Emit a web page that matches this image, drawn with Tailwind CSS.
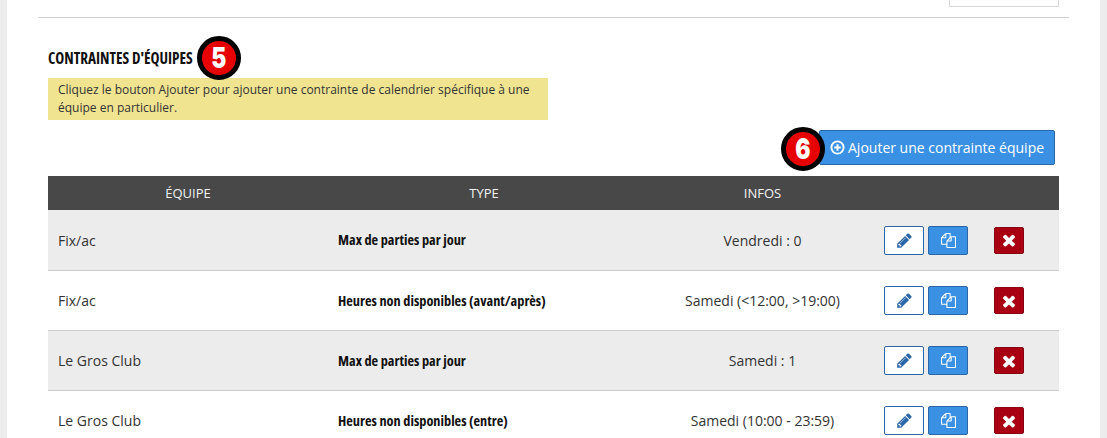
<!DOCTYPE html>
<html lang="fr">
<head>
  <meta charset="UTF-8" />
  <title>Contraintes d'équipes</title>
  <script src="https://cdn.jsdelivr.net/npm/@tailwindcss/browser@4"></script>
</head>
<body class="bg-[#ececec] h-[438px] overflow-hidden font-['Open_Sans',sans-serif] text-[#333]">
  <main class="mx-[7px] bg-white h-[438px] overflow-hidden">
    <div class="mx-[31px] h-[18px] border-b border-[#d0d0d0] flex justify-end pr-[10px]">
      <div class="w-[110px] h-[7px] border border-t-0 border-[#d8d8d8] bg-white"></div>
    </div>

    <section class="px-[41px]">
      <h2 class="relative h-[60px] pt-[32px] text-[15.2px] leading-[16px] font-bold uppercase text-[#111] [font-stretch:75%]">
        Contraintes d'équipes
        <span class="absolute left-[149px] top-[18px] w-[44px] h-[44px] rounded-full bg-[#e60000] border-[5px] border-black flex items-center justify-center text-white text-[29px] font-black font-['Inter',sans-serif]"><span class="inline-block scale-x-[0.78]">5</span></span>
      </h2>
      <p class="w-[500px] h-[42px] bg-[#f0e491] px-[10px] py-[3px] text-[12px] leading-[18px]">Cliquez le bouton Ajouter pour ajouter une contrainte de calendrier spécifique à une équipe en particulier.</p>

      <div class="relative mt-[10px] mb-[11px] flex justify-end pr-[4px]">
        <a class="relative h-[35px] w-[236px] rounded-[2px] bg-[#3a90e3] border border-[#2a66a8] flex items-center pl-[10px] gap-[3px] text-white text-[14px]">
          <svg class="w-[15px] h-[15px]" viewBox="0 0 16 16" fill="none" stroke="white"><circle cx="8" cy="8" r="6.5" stroke-width="2"/><path d="M8 4.5v7M4.5 8h7" stroke-width="2.2"/></svg>
          Ajouter une contrainte équipe
          <span class="absolute left-[-39px] top-[-4px] w-[44px] h-[44px] rounded-full bg-[#e60000] border-[5px] border-black flex items-center justify-center text-white text-[29px] font-black font-['Inter',sans-serif]"><span class="inline-block scale-x-[0.78]">6</span></span>
        </a>
      </div>

      <div class="w-[1011px] text-[14px]">
        <div class="grid grid-cols-[280px_312px_245px_174px] h-[34px] pt-[1px] bg-[#484848] text-[#f2f2f2] text-[13px] uppercase items-center text-center">
          <div>Équipe</div><div>Type</div><div>Infos</div><div></div>
        </div>

        <div class="grid grid-cols-[280px_312px_245px_174px] h-[61px] bg-[#ececec] border-b border-[#ccc] items-center">
          <div class="pl-[10px]">Fix/ac</div>
          <div class="pl-[10px] font-bold text-[14.3px] text-[#111] [font-stretch:75%]">Max de parties par jour</div>
          <div class="text-center">Vendredi : 0</div>
          <div class="flex items-center -ml-[1px]">
            <button class="w-[40px] h-[29px] rounded-[2px] bg-white border border-[#2a66a8] flex items-center justify-center"><svg class="w-[17px] h-[17px]" viewBox="0 0 1792 1792" fill="#2a66a8"><path d="M491 1536l91-91-235-235-91 91v107h128v128h107zm523-928q0-22-22-22-10 0-17 7l-542 542q-7 7-7 17 0 22 22 22 10 0 17-7l542-542q7-7 7-17zm-54-192l416 416-832 832h-416v-416zm683 96q0 53-37 90l-166 166-416-416 166-165q36-38 90-38 53 0 91 38l235 234q37 39 37 91z"/></svg></button>
            <button class="ml-[4px] w-[40px] h-[29px] rounded-[2px] bg-[#3a90e3] border border-[#2a66a8] flex items-center justify-center"><svg class="w-[15px] h-[15px]" viewBox="0 0 1792 1792" fill="white"><path d="M1696 384q40 0 68 28t28 68v1216q0 40-28 68t-68 28h-960q-40 0-68-28t-28-68v-288h-544q-40 0-68-28t-28-68v-672q0-40 20-88t48-76l408-408q28-28 76-48t88-20h416q40 0 68 28t28 68v328q68-40 128-40h416zm-544 213l-299 299h299v-299zm-640-384l-299 299h299v-299zm196 647l316-316v-416h-384v416q0 40-28 68t-68 28h-416v640h512v-256q0-40 20-88t48-76zm956 804v-1152h-384v416q0 40-28 68t-68 28h-416v640h896z"/></svg></button>
            <button class="ml-[26px] w-[30px] h-[27px] rounded-[2px] bg-[#a80012] border border-[#8a0010] flex items-center justify-center"><svg class="w-[18px] h-[18px]" viewBox="0 0 1792 1792" fill="white"><path d="M1490 1322q0 40-28 68l-136 136q-28 28-68 28t-68-28l-294-294-294 294q-28 28-68 28t-68-28l-136-136q-28-28-28-68t28-68l294-294-294-294q-28-28-28-68t28-68l136-136q28-28 68-28t68 28l294 294 294-294q28-28 68-28t68 28l136 136q28 28 28 68t-28 68l-294 294 294 294q28 28 28 68z"/></svg></button>
          </div>
        </div>

        <div class="grid grid-cols-[280px_312px_245px_174px] h-[60px] bg-white border-b border-[#ccc] items-center">
          <div class="pl-[10px]">Fix/ac</div>
          <div class="pl-[10px] font-bold text-[14.3px] text-[#111] [font-stretch:75%]">Heures non disponibles (avant/après)</div>
          <div class="text-center">Samedi (&lt;12:00, &gt;19:00)</div>
          <div class="flex items-center -ml-[1px]">
            <button class="w-[40px] h-[29px] rounded-[2px] bg-white border border-[#2a66a8] flex items-center justify-center"><svg class="w-[17px] h-[17px]" viewBox="0 0 1792 1792" fill="#2a66a8"><path d="M491 1536l91-91-235-235-91 91v107h128v128h107zm523-928q0-22-22-22-10 0-17 7l-542 542q-7 7-7 17 0 22 22 22 10 0 17-7l542-542q7-7 7-17zm-54-192l416 416-832 832h-416v-416zm683 96q0 53-37 90l-166 166-416-416 166-165q36-38 90-38 53 0 91 38l235 234q37 39 37 91z"/></svg></button>
            <button class="ml-[4px] w-[40px] h-[29px] rounded-[2px] bg-[#3a90e3] border border-[#2a66a8] flex items-center justify-center"><svg class="w-[15px] h-[15px]" viewBox="0 0 1792 1792" fill="white"><path d="M1696 384q40 0 68 28t28 68v1216q0 40-28 68t-68 28h-960q-40 0-68-28t-28-68v-288h-544q-40 0-68-28t-28-68v-672q0-40 20-88t48-76l408-408q28-28 76-48t88-20h416q40 0 68 28t28 68v328q68-40 128-40h416zm-544 213l-299 299h299v-299zm-640-384l-299 299h299v-299zm196 647l316-316v-416h-384v416q0 40-28 68t-68 28h-416v640h512v-256q0-40 20-88t48-76zm956 804v-1152h-384v416q0 40-28 68t-68 28h-416v640h896z"/></svg></button>
            <button class="ml-[26px] w-[30px] h-[27px] rounded-[2px] bg-[#a80012] border border-[#8a0010] flex items-center justify-center"><svg class="w-[18px] h-[18px]" viewBox="0 0 1792 1792" fill="white"><path d="M1490 1322q0 40-28 68l-136 136q-28 28-68 28t-68-28l-294-294-294 294q-28 28-68 28t-68-28l-136-136q-28-28-28-68t28-68l294-294-294-294q-28-28-28-68t28-68l136-136q28-28 68-28t68 28l294 294 294-294q28-28 68-28t68 28l136 136q28 28 28 68t-28 68l-294 294 294 294q28 28 28 68z"/></svg></button>
          </div>
        </div>

        <div class="grid grid-cols-[280px_312px_245px_174px] h-[60px] bg-[#ececec] border-b border-[#ccc] items-center">
          <div class="pl-[10px]">Le Gros Club</div>
          <div class="pl-[10px] font-bold text-[14.3px] text-[#111] [font-stretch:75%]">Max de parties par jour</div>
          <div class="text-center">Samedi : 1</div>
          <div class="flex items-center -ml-[1px]">
            <button class="w-[40px] h-[29px] rounded-[2px] bg-white border border-[#2a66a8] flex items-center justify-center"><svg class="w-[17px] h-[17px]" viewBox="0 0 1792 1792" fill="#2a66a8"><path d="M491 1536l91-91-235-235-91 91v107h128v128h107zm523-928q0-22-22-22-10 0-17 7l-542 542q-7 7-7 17 0 22 22 22 10 0 17-7l542-542q7-7 7-17zm-54-192l416 416-832 832h-416v-416zm683 96q0 53-37 90l-166 166-416-416 166-165q36-38 90-38 53 0 91 38l235 234q37 39 37 91z"/></svg></button>
            <button class="ml-[4px] w-[40px] h-[29px] rounded-[2px] bg-[#3a90e3] border border-[#2a66a8] flex items-center justify-center"><svg class="w-[15px] h-[15px]" viewBox="0 0 1792 1792" fill="white"><path d="M1696 384q40 0 68 28t28 68v1216q0 40-28 68t-68 28h-960q-40 0-68-28t-28-68v-288h-544q-40 0-68-28t-28-68v-672q0-40 20-88t48-76l408-408q28-28 76-48t88-20h416q40 0 68 28t28 68v328q68-40 128-40h416zm-544 213l-299 299h299v-299zm-640-384l-299 299h299v-299zm196 647l316-316v-416h-384v416q0 40-28 68t-68 28h-416v640h512v-256q0-40 20-88t48-76zm956 804v-1152h-384v416q0 40-28 68t-68 28h-416v640h896z"/></svg></button>
            <button class="ml-[26px] w-[30px] h-[27px] rounded-[2px] bg-[#a80012] border border-[#8a0010] flex items-center justify-center"><svg class="w-[18px] h-[18px]" viewBox="0 0 1792 1792" fill="white"><path d="M1490 1322q0 40-28 68l-136 136q-28 28-68 28t-68-28l-294-294-294 294q-28 28-68 28t-68-28l-136-136q-28-28-28-68t28-68l294-294-294-294q-28-28-28-68t28-68l136-136q28-28 68-28t68 28l294 294 294-294q28-28 68-28t68 28l136 136q28 28 28 68t-28 68l-294 294 294 294q28 28 28 68z"/></svg></button>
          </div>
        </div>

        <div class="grid grid-cols-[280px_312px_245px_174px] h-[60px] bg-white border-b border-[#ccc] items-center">
          <div class="pl-[10px]">Le Gros Club</div>
          <div class="pl-[10px] font-bold text-[14.3px] text-[#111] [font-stretch:75%]">Heures non disponibles (entre)</div>
          <div class="text-center">Samedi (10:00 - 23:59)</div>
          <div class="flex items-center -ml-[1px]">
            <button class="w-[40px] h-[29px] rounded-[2px] bg-white border border-[#2a66a8] flex items-center justify-center"><svg class="w-[17px] h-[17px]" viewBox="0 0 1792 1792" fill="#2a66a8"><path d="M491 1536l91-91-235-235-91 91v107h128v128h107zm523-928q0-22-22-22-10 0-17 7l-542 542q-7 7-7 17 0 22 22 22 10 0 17-7l542-542q7-7 7-17zm-54-192l416 416-832 832h-416v-416zm683 96q0 53-37 90l-166 166-416-416 166-165q36-38 90-38 53 0 91 38l235 234q37 39 37 91z"/></svg></button>
            <button class="ml-[4px] w-[40px] h-[29px] rounded-[2px] bg-[#3a90e3] border border-[#2a66a8] flex items-center justify-center"><svg class="w-[15px] h-[15px]" viewBox="0 0 1792 1792" fill="white"><path d="M1696 384q40 0 68 28t28 68v1216q0 40-28 68t-68 28h-960q-40 0-68-28t-28-68v-288h-544q-40 0-68-28t-28-68v-672q0-40 20-88t48-76l408-408q28-28 76-48t88-20h416q40 0 68 28t28 68v328q68-40 128-40h416zm-544 213l-299 299h299v-299zm-640-384l-299 299h299v-299zm196 647l316-316v-416h-384v416q0 40-28 68t-68 28h-416v640h512v-256q0-40 20-88t48-76zm956 804v-1152h-384v416q0 40-28 68t-68 28h-416v640h896z"/></svg></button>
            <button class="ml-[26px] w-[30px] h-[27px] rounded-[2px] bg-[#a80012] border border-[#8a0010] flex items-center justify-center"><svg class="w-[18px] h-[18px]" viewBox="0 0 1792 1792" fill="white"><path d="M1490 1322q0 40-28 68l-136 136q-28 28-68 28t-68-28l-294-294-294 294q-28 28-68 28t-68-28l-136-136q-28-28-28-68t28-68l294-294-294-294q-28-28-28-68t28-68l136-136q28-28 68-28t68 28l294 294 294-294q28-28 68-28t68 28l136 136q28 28 28 68t-28 68l-294 294 294 294q28 28 28 68z"/></svg></button>
          </div>
        </div>
      </div>
    </section>
  </main>
</body>
</html>
